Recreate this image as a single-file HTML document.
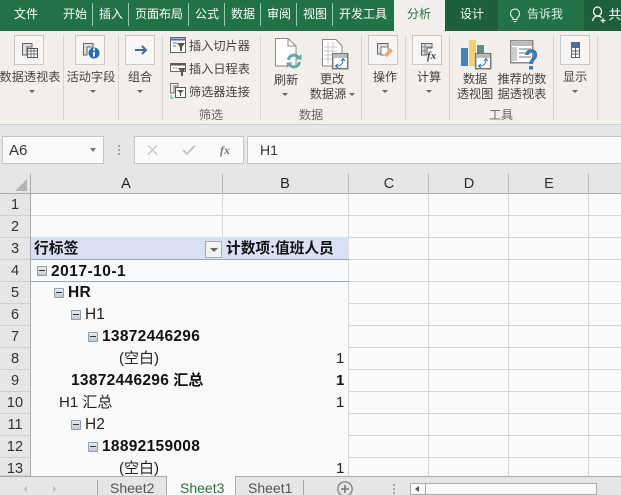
<!DOCTYPE html>
<html lang="zh"><head><meta charset="utf-8"><style>
html,body{margin:0;padding:0;width:621px;height:495px;overflow:hidden;background:#e6e6e6}
body{position:relative;font-family:"Liberation Sans","Noto Sans CJK SC",sans-serif;color:#444}
.a,.t{position:absolute}
.t{white-space:nowrap;line-height:1}
.tab{color:#fff;font-size:12px;top:8px;transform:translateX(-50%)}
.sep{position:absolute;top:3px;width:1px;height:23px;background:#a5c5b3}
.rb{color:#444;font-size:12.2px;transform:translateX(-50%)}
.gs{position:absolute;top:35px;width:1px;height:85px;background:#d8d5d2}
.btn{position:absolute;top:35px;width:30px;height:30px;background:#f7f6f4;border:1px solid #c8c8c8;box-sizing:border-box}
.caret{position:absolute;width:0;height:0;border-left:3px solid transparent;border-right:3px solid transparent;border-top:3px solid #666}
.gl{color:#666;font-size:12.2px;transform:translateX(-50%)}
.rh{position:absolute;left:0;width:30px;text-align:center;font-size:14.5px;line-height:22px;color:#333;background:#e6e6e6;border-bottom:1px solid #d0d0d0;height:22px;box-sizing:border-box}
.h{position:absolute;background:#d6d6d6;height:1px;left:31px;width:590px}
.v{position:absolute;background:#d6d6d6;width:1px;top:193px;height:283px}
.cell{position:absolute;font-size:15px;line-height:22px;height:22px;color:#222;white-space:nowrap;margin-top:1px}
.b{font-weight:bold;color:#111}
.n{letter-spacing:.3px;font-size:15.5px}
.m{position:absolute;width:10px;height:10px;box-sizing:border-box;border:1px solid #8aa0b8;background:linear-gradient(#e8eaec,#c6cacd);border-radius:1px}
.m:after{content:"";position:absolute;left:1px;top:3px;width:6px;height:1px;background:#333}
svg{position:absolute;overflow:visible}
</style></head><body>

<div class="a" style="left:0;top:0;width:621px;height:31px;background:#217346"></div>
<div class="t tab" style="left:26px">文件</div>
<div class="t tab" style="left:75px">开始</div><div class="sep" style="left:92px"></div>
<div class="t tab" style="left:111px">插入</div><div class="sep" style="left:128px"></div>
<div class="t tab" style="left:159px">页面布局</div><div class="sep" style="left:188px"></div>
<div class="t tab" style="left:207px">公式</div><div class="sep" style="left:224px"></div>
<div class="t tab" style="left:243px">数据</div><div class="sep" style="left:260px"></div>
<div class="t tab" style="left:279px">审阅</div><div class="sep" style="left:296px"></div>
<div class="t tab" style="left:315px">视图</div><div class="sep" style="left:332px"></div>
<div class="t tab" style="left:363px">开发工具</div>
<div class="a" style="left:394px;top:0;width:51px;height:31px;background:#f3efeb"></div>
<div class="t tab" style="left:419px;color:#217346">分析</div>
<div class="a" style="left:445px;top:0;width:53px;height:31px;background:#1c5f3a"></div>
<div class="t tab" style="left:472px">设计</div>
<svg style="left:509px;top:8px" width="14" height="18" fill="none" stroke="#fff" stroke-width="1"><path d="M4 10C2 8.500 1.500 7 1.500 5.500A4.500 4.500 0 0 1 10.500 5.500C10.500 7 10 8.500 8 10V11.500H4ZM4.500 13.500H7.500"/></svg>
<div class="t tab" style="left:545px;color:#dfeae4">告诉我</div>
<div class="a" style="left:584px;top:0;width:37px;height:31px;background:#1c5f3a"></div>
<svg style="left:592px;top:6px" width="16" height="18" fill="none" stroke="#fff" stroke-width="1.200"><path d="M.5 15C1.500 11 3.500 10 5.500 10C7.500 10 8.500 10.500 9.500 11.500M5.500 10A4 4.500 0 1 0 5.500 1A4 4.500 0 1 0 5.500 10ZM11 12V17M8.500 14.500H13.500"/></svg>
<div class="t tab" style="left:615px;font-size:13px">共</div>

<div class="a" style="left:0;top:31px;width:621px;height:94px;background:#f3efeb;border-bottom:1px solid #cfcfcf;box-sizing:border-box"></div>

<div class="btn" style="left:14px"></div>
<svg style="left:22px;top:43px" width="16" height="16"><path d="M.5.500H10V4H5V12H.5Z" fill="#ddd" stroke="#666"/><rect x="5.500" y="5.500" width="10" height="9" fill="#fff" stroke="#555"/><path d="M6 8H15M9 6V14M12 6V14M6 11H15" stroke="#777"/></svg>
<div class="t rb" style="left:30px;top:71px">数据透视表</div><div class="caret" style="left:29px;top:90px"></div>
<div class="gs" style="left:63px"></div>

<div class="btn" style="left:75px"></div>
<svg style="left:83px;top:43px" width="17" height="17"><path d="M.5.500H10V4H4V12H.5Z" fill="#ddd" stroke="#666"/><circle cx="11" cy="10" r="5.500" fill="#2b6cb0"/><path d="M10 5.500H12V7.500H10ZM10 9H12V13.500H10Z" fill="#fff"/></svg>
<div class="t rb" style="left:91px;top:71px">活动字段</div><div class="caret" style="left:90px;top:90px"></div>
<div class="gs" style="left:118px"></div>

<div class="btn" style="left:125px"></div>
<svg style="left:135px;top:44px" width="13" height="12" fill="none" stroke="#41699f" stroke-width="2"><path d="M0 6H11M7 2L11 6L7 10"/></svg>
<div class="t rb" style="left:140px;top:71px">组合</div><div class="caret" style="left:137px;top:90px"></div>
<div class="gs" style="left:162px"></div>

<svg style="left:170px;top:37px" width="16" height="16"><rect x=".5" y=".5" width="15" height="15" fill="#fff" stroke="#666"/><path d="M1 2.500H15" stroke="#4472a8" stroke-width="2"/><path d="M3 6H7M3 9H6" stroke="#4472a8"/><path d="M7 6H15L12 10V14H10V10Z" fill="#555"/></svg>
<div class="t" style="left:189px;top:40px;font-size:12.2px">插入切片器</div>
<svg style="left:170px;top:61px" width="16" height="16"><rect x=".5" y="2.500" width="15" height="8" fill="#fff" stroke="#666"/><path d="M1 3.500H15" stroke="#555" stroke-width="2"/><path d="M3 7H8" stroke="#4472a8" stroke-dasharray="1.500 1"/><path d="M8 7H16L13 11V15H11V11Z" fill="#555"/></svg>
<div class="t" style="left:189px;top:63px;font-size:12.2px">插入日程表</div>
<svg style="left:170px;top:83px" width="16" height="16"><path d="M.5.500H8V3H4V10H.5Z" fill="#eee" stroke="#777"/><rect x="5.500" y="4.500" width="10" height="10" fill="#fff" stroke="#555"/><path d="M7 7H14L11 10V13H10V10Z" fill="#555"/><path d="M1 12V15H4" fill="none" stroke="#4a9"/></svg>
<div class="t" style="left:189px;top:86px;font-size:12.2px">筛选器连接</div>
<div class="t gl" style="left:211px;top:109px">筛选</div>
<div class="gs" style="left:260px"></div>

<svg style="left:275px;top:38px" width="29" height="31"><path d="M.5.500H13L21 8V28H.5Z" fill="#fff" stroke="#8a8a8a"/><path d="M13 1V8H21" fill="none" stroke="#8a8a8a"/><path d="M13.500 22A5.500 5.500 0 0 1 23.500 19.500M24.500 24A5.500 5.500 0 0 1 14.500 26.500" fill="none" stroke="#6aa5a0" stroke-width="3"/><path d="M20.500 21.500H26.500V16ZM17.500 24.500H11.500V30Z" fill="#6aa5a0"/></svg>
<div class="t rb" style="left:286px;top:74px">刷新</div><div class="caret" style="left:282px;top:93px"></div>
<svg style="left:321px;top:39px" width="28" height="30"><path d="M1.500.500H15L21 7V27H1.500Z" fill="#fff" stroke="#8a8a8a"/><path d="M3 8H16M3 12H16M3 16H16M3 20H16M7 3V25M12 3V25" stroke="#c8c8c8"/><rect x="11.700" y="14.700" width="15" height="15" fill="#fff" stroke="#777" stroke-width="1.500"/><rect x="12" y="15" width="14" height="4" fill="#bbb"/><path d="M15 27C20 27 22 25 22 20.500M20 22L22 19.500L24 22M17 25L14.500 27L17 29" fill="none" stroke="#2b6cb0"/></svg>
<div class="t rb" style="left:332px;top:73px">更改</div>
<div class="t rb" style="left:328px;top:88px">数据源</div><div class="caret" style="left:349px;top:93px"></div>
<div class="t gl" style="left:311px;top:109px">数据</div>
<div class="gs" style="left:361px"></div>

<div class="btn" style="left:368px"></div>
<svg style="left:377px;top:43px" width="17" height="16"><path d="M.5.500H11V4H4V11H.5Z" fill="#ddd" stroke="#666"/><rect x="4" y="4" width="7" height="8" fill="#fff" stroke="#777"/><path d="M7 12L13 5L16 8L10 14Z" fill="#eea57f"/></svg>
<div class="t rb" style="left:385px;top:71px">操作</div><div class="caret" style="left:382px;top:90px"></div>
<div class="gs" style="left:405px"></div>

<div class="btn" style="left:412px"></div>
<svg style="left:421px;top:43px" width="16" height="16"><path d="M.5.500H11V5H6V12H.5Z" fill="#ddd" stroke="#666"/><path d="M1 4H11M1 8H6M4 1V12" stroke="#888"/></svg>
<div class="t" style="left:427px;top:50px;font:italic bold 11px 'Liberation Serif',serif;color:#444">fx</div>
<div class="t rb" style="left:429px;top:71px">计算</div><div class="caret" style="left:426px;top:90px"></div>
<div class="gs" style="left:449px"></div>

<svg style="left:461px;top:40px" width="32" height="30"><rect x="0" y="8" width="7" height="18" fill="#4f81b5"/><rect x="8" y="0" width="7" height="26" fill="#f5cf75"/><rect x="16" y="5" width="7" height="8" fill="#6a8a8a"/><rect x="14.700" y="13.700" width="15" height="15" fill="#fff" stroke="#777" stroke-width="1.500"/><rect x="15" y="14" width="14" height="4" fill="#bbb"/><path d="M18 26C23 26 25 24 25 19.500M23 21L25 18.500L27 21M20 24L17.500 26L20 28" fill="none" stroke="#2b6cb0"/></svg>
<div class="t rb" style="left:475px;top:73px">数据</div>
<div class="t rb" style="left:475px;top:88px">透视图</div>
<svg style="left:510px;top:40px" width="30" height="30"><rect x=".75" y=".75" width="22" height="22" fill="#fff" stroke="#8a8a8a" stroke-width="1.500"/><rect x="2" y="2" width="20" height="4" fill="#bbb"/><rect x="2" y="7" width="5" height="14" fill="#ccc"/><path d="M9 9H21M9 13H21M9 17H21" stroke="#bbb" stroke-width="2"/><path d="M17 15C17 9.500 25.500 9.500 25.500 15C25.500 19 21 19 21 24" fill="none" stroke="#3b79b9" stroke-width="3.500"/><rect x="19" y="26" width="4" height="3.500" fill="#3b79b9"/></svg>
<div class="t rb" style="left:522px;top:73px">推荐的数</div>
<div class="t rb" style="left:522px;top:88px">据透视表</div>
<div class="t gl" style="left:501px;top:109px">工具</div>
<div class="gs" style="left:553px"></div>

<div class="btn" style="left:560px"></div>
<svg style="left:571px;top:42px" width="9" height="16"><rect x=".5" y=".5" width="8" height="15" fill="#fff" stroke="#666"/><rect x="1" y="1" width="7" height="5" fill="#4a6ba5"/><path d="M1 9H8M1 12H8M4.500 6V15" stroke="#666"/></svg>
<div class="t rb" style="left:575px;top:71px">显示</div><div class="caret" style="left:572px;top:90px"></div>
<div class="gs" style="left:597px"></div>

<div class="a" style="left:2px;top:136px;width:102px;height:28px;background:#fafafa;border:1px solid #c6c6c6;box-sizing:border-box"></div>
<div class="t" style="left:9px;top:143px;font-size:15px;color:#333">A6</div>
<div class="a" style="left:90px;top:148px;border-left:3.500px solid transparent;border-right:3.500px solid transparent;border-top:4px solid #777"></div>
<div class="a" style="left:118px;top:145px;width:2px;height:11px;background:repeating-linear-gradient(#aaa 0 2px,transparent 2px 4px)"></div>
<div class="a" style="left:134px;top:136px;width:110px;height:28px;background:#fafafa;border:1px solid #c6c6c6;box-sizing:border-box"></div>
<svg style="left:147px;top:144px" width="12" height="12" fill="none" stroke="#c8c8c8" stroke-width="1.500"><path d="M1 1.500L10 10.500M10 1.500L1 10.500"/></svg>
<svg style="left:182px;top:144px" width="14" height="12" fill="none" stroke="#c8c8c8" stroke-width="2"><path d="M1 6L5 10L13 1.500"/></svg>
<div class="t" style="left:220px;top:143px;font:italic bold 12px 'Liberation Serif',serif;color:#777">fx</div>
<div class="a" style="left:247px;top:136px;width:374px;height:28px;background:#fafafa;border:1px solid #c6c6c6;border-right:0;box-sizing:border-box"></div>
<div class="t" style="left:260px;top:143px;font-size:14px;color:#333">H1</div>

<div class="a" style="left:0;top:174px;width:621px;height:20px;background:#e6e6e6;border-bottom:1px solid #ababab;box-sizing:border-box"></div>
<svg style="left:15px;top:179px" width="13" height="13"><path d="M12 0V12H0Z" fill="#b5b5b5"/></svg>
<div class="a" style="left:30px;top:174px;width:1px;height:302px;background:#ababab"></div>
<div class="a" style="left:222px;top:174px;width:1px;height:19px;background:#b5b5b5"></div>
<div class="a" style="left:348px;top:174px;width:1px;height:19px;background:#b5b5b5"></div>
<div class="a" style="left:428px;top:174px;width:1px;height:19px;background:#b5b5b5"></div>
<div class="a" style="left:508px;top:174px;width:1px;height:19px;background:#b5b5b5"></div>
<div class="a" style="left:588px;top:174px;width:1px;height:19px;background:#b5b5b5"></div>
<div class="t" style="left:126px;top:177px;font-size:14.5px;color:#222;transform:translateX(-50%)">A</div>
<div class="t" style="left:285px;top:177px;font-size:14.5px;color:#222;transform:translateX(-50%)">B</div>
<div class="t" style="left:389px;top:177px;font-size:14.5px;color:#333;transform:translateX(-50%)">C</div>
<div class="t" style="left:469px;top:177px;font-size:14.5px;color:#333;transform:translateX(-50%)">D</div>
<div class="t" style="left:549px;top:177px;font-size:14.5px;color:#333;transform:translateX(-50%)">E</div>

<div class="a" style="left:31px;top:194px;width:590px;height:282px;background:#fafafa"></div>
<div class="h" style="top:215px"></div><div class="h" style="top:237px"></div><div class="h" style="top:259px;left:349px;width:272px"></div><div class="h" style="top:281px;left:349px;width:272px"></div><div class="h" style="top:303px;left:349px;width:272px"></div><div class="h" style="top:325px;left:349px;width:272px"></div><div class="h" style="top:347px;left:349px;width:272px"></div><div class="h" style="top:369px;left:349px;width:272px"></div><div class="h" style="top:391px;left:349px;width:272px"></div><div class="h" style="top:413px;left:349px;width:272px"></div><div class="h" style="top:435px;left:349px;width:272px"></div><div class="h" style="top:457px;left:349px;width:272px"></div>
<div class="v" style="left:222px;height:44px"></div><div class="v" style="left:348px"></div><div class="v" style="left:428px"></div><div class="v" style="left:508px"></div><div class="v" style="left:588px"></div>

<div class="rh" style="top:194px;height:22px">1</div><div class="rh" style="top:216px">2</div><div class="rh" style="top:238px">3</div><div class="rh" style="top:260px">4</div><div class="rh" style="top:282px">5</div><div class="rh" style="top:304px">6</div><div class="rh" style="top:326px">7</div><div class="rh" style="top:348px">8</div><div class="rh" style="top:370px">9</div><div class="rh" style="top:392px">10</div><div class="rh" style="top:414px">11</div><div class="rh" style="top:436px">12</div><div class="rh" style="top:458px;height:18px;overflow:hidden">13</div>

<div class="a" style="left:31px;top:237px;width:318px;height:23px;background:#d9e1f2;border-bottom:1px solid #8ea9db;box-sizing:border-box"></div>
<div class="cell b" style="left:34px;top:237px;font-size:14.8px">行标签</div>
<div class="a" style="left:205px;top:241px;width:17px;height:17px;background:#f3f3f3;border:1px solid #aaa;box-sizing:border-box"></div>
<div class="a" style="left:210px;top:248px;border-left:4px solid transparent;border-right:4px solid transparent;border-top:4px solid #666"></div>
<div class="cell b" style="left:226px;top:237px;font-size:14.7px">计数项:值班人员</div>

<div class="a" style="left:31px;top:281px;width:318px;height:1px;background:#8ea9db"></div>
<div class="m" style="left:37px;top:266px"></div><div class="cell b n" style="left:51px;top:260px;letter-spacing:.5px">2017-10-1</div>
<div class="m" style="left:54px;top:288px"></div><div class="cell b n" style="left:68px;top:281px">HR</div>
<div class="m" style="left:71px;top:310px"></div><div class="cell" style="left:85px;top:303px;font-size:15.500px">H1</div>
<div class="m" style="left:88px;top:332px"></div><div class="cell b n" style="left:102px;top:325px">13872446296</div>
<div class="cell" style="left:119px;top:347px">(空白)</div><div class="cell" style="left:336px;top:347px">1</div>
<div class="cell b" style="left:71px;top:369px"><span class="n">13872446296</span> 汇总</div><div class="cell b" style="left:336px;top:369px">1</div>
<div class="cell" style="left:59px;top:391px">H1 汇总</div><div class="cell" style="left:336px;top:391px">1</div>
<div class="m" style="left:71px;top:420px"></div><div class="cell" style="left:85px;top:413px;font-size:15.500px">H2</div>
<div class="m" style="left:88px;top:442px"></div><div class="cell b n" style="left:102px;top:435px">18892159008</div>
<div class="cell" style="left:119px;top:457px;height:18px;overflow:hidden">(空白)</div><div class="cell" style="left:336px;top:457px;height:18px;overflow:hidden">1</div>

<div class="a" style="left:0;top:476px;width:621px;height:19px;background:#e6e6e6;border-top:1px solid #ababab;box-sizing:border-box"></div>
<div class="a" style="left:23px;top:486px;border-top:3px solid transparent;border-bottom:3px solid transparent;border-right:4px solid #c4c4c4"></div>
<div class="a" style="left:53px;top:486px;border-top:3px solid transparent;border-bottom:3px solid transparent;border-left:4px solid #c4c4c4"></div>
<div class="a" style="left:97px;top:480px;width:1px;height:15px;background:#aaa"></div>
<div class="t" style="left:110px;top:481px;font-size:14px;color:#555">Sheet2</div>
<div class="a" style="left:166px;top:476px;width:70px;height:19px;background:#fafafa;border-left:1px solid #aaa;border-right:1px solid #aaa;box-sizing:border-box"></div>
<div class="t" style="left:180px;top:481px;font-size:14px;color:#217346">Sheet3</div>
<div class="t" style="left:248px;top:481px;font-size:14px;color:#555">Sheet1</div>
<div class="a" style="left:303px;top:480px;width:1px;height:15px;background:#aaa"></div>
<svg style="left:337px;top:481px" width="16" height="16" fill="none" stroke="#777" stroke-width="1.200"><circle cx="8" cy="8" r="7.200"/><path d="M8 4V12M4 8H12" stroke-width="1.600"/></svg>
<div class="a" style="left:393px;top:484px;width:2px;height:11px;background:repeating-linear-gradient(#aaa 0 2px,transparent 2px 4px)"></div>
<div class="a" style="left:410px;top:483px;width:187px;height:12px;background:#fafafa;border:1px solid #ababab;box-sizing:border-box"></div>
<div class="a" style="left:425px;top:483px;width:1px;height:12px;background:#ababab"></div>
<div class="a" style="left:415px;top:486px;border-top:3.500px solid transparent;border-bottom:3.500px solid transparent;border-right:4px solid #555"></div>
</body></html>
